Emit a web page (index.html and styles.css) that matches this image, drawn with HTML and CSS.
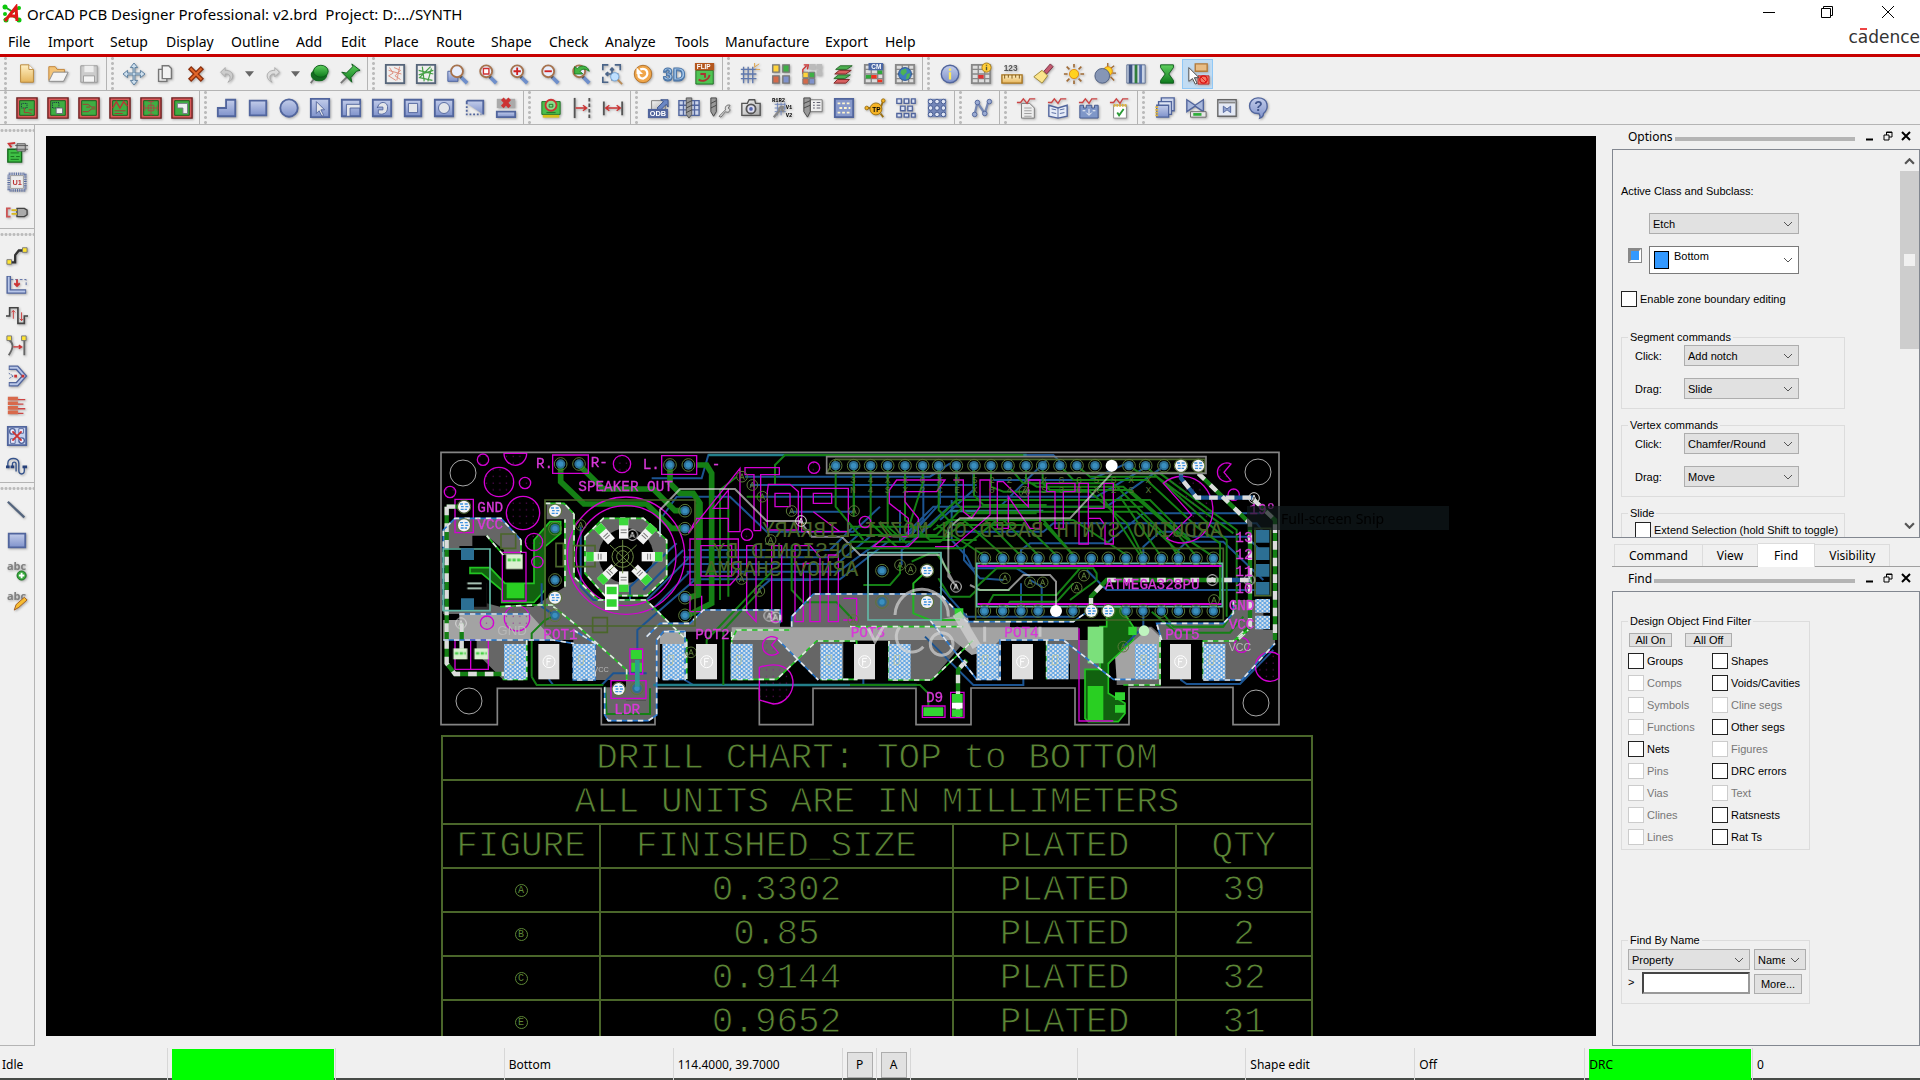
FILE: index.html
```html
<!DOCTYPE html>
<html lang="en">
<head>
<meta charset="utf-8">
<title>OrCAD PCB Designer Professional</title>
<link rel="stylesheet" href="styles.css">
</head>
<body>
<svg class="defs" width="0" height="0" aria-hidden="true">
<defs>
<linearGradient id="blue" x2="0" y2="1"><stop stop-color="#c3cdea"/><stop offset="1" stop-color="#7f92cb"/></linearGradient>
<linearGradient id="silver" x2="1" y2="1"><stop stop-color="#f6f6f6"/><stop offset="1" stop-color="#a9a9a9"/></linearGradient>
<linearGradient id="gold" x2="0" y2="1"><stop stop-color="#fff0c4"/><stop offset="1" stop-color="#e5b55c"/></linearGradient>
<linearGradient id="leaf" x2="0" y2="1"><stop stop-color="#5fd05f"/><stop offset="1" stop-color="#0e7a1c"/></linearGradient>
<symbol id="lens" viewBox="0 0 24 24"><path d="M14 15l7 7" stroke="#6f8fcb" stroke-width="4"/><path d="M13 14l2 2" stroke="#555" stroke-width="3"/><circle cx="10" cy="9" r="6.5" fill="#e8eefc" stroke="#a6724d" stroke-width="2"/></symbol>
<symbol id="board" viewBox="0 0 24 24"><path d="M1 1h22v22H1z" fill="#d85a5a" stroke="#6e2020" stroke-width="1.5"/><path d="M4 4h16v16H4z" fill="#3fae42" stroke="#175c1b"/></symbol>
<symbol id="sheet" viewBox="0 0 24 24"><path d="M6 7h9l5 5v11H6z" fill="#ececec" stroke="#777"/><path d="M9 12h8M9 15h8M9 18h8M9 21h8" stroke="#999"/></symbol>
<symbol id="wave" viewBox="0 0 24 24"><path d="M1 6h4l3-4 4 5 3-5h6" fill="none" stroke="#c44" stroke-width="1.5"/></symbol>
<symbol id="cells" viewBox="0 0 24 24"><path d="M2 2h20v20H2z" fill="#ddd" stroke="#888" stroke-width="2"/><path d="M2 7h20M2 12h20M2 17h20M9 2v20M16 2v20" stroke="#888" stroke-width="1.5"/></symbol>
</defs>
</svg>

<header class="titlebar">
  <svg class="app-icon" viewBox="0 0 20 20"><path d="M3 3l8 5 6-4M2 16l7-5 8 5" fill="none" stroke="#1ca51c" stroke-width="2"/><g fill="#0cc80c"><circle cx="3" cy="3" r="2.5"/><circle cx="3" cy="10" r="2"/><circle cx="4" cy="16" r="2.5"/><circle cx="17" cy="16" r="2.5"/><circle cx="17" cy="4" r="2"/></g><path d="M3 17L14 3l1 14M6 12h9" fill="none" stroke="#e01818" stroke-width="3"/></svg>
  <h1>OrCAD PCB Designer Professional: v2.brd&nbsp; Project: D:.../SYNTH</h1>
  <div class="window-controls">
    <button aria-label="Minimize"><svg viewBox="0 0 12 12"><path d="M0 6.500h12"/></svg></button>
    <button aria-label="Restore"><svg viewBox="0 0 12 12"><path d="M.5 2.500h9v9h-9zM2.500 2V.5h9v9H10"/></svg></button>
    <button aria-label="Close"><svg viewBox="0 0 12 12"><path d="M0 0l12 12M12 0L0 12"/></svg></button>
  </div>
</header>
<div class="menubar">
  <nav class="menu"><button>File</button><button>Import</button><button>Setup</button><button>Display</button><button>Outline</button><button>Add</button><button>Edit</button><button>Place</button><button>Route</button><button>Shape</button><button>Check</button><button>Analyze</button><button>Tools</button><button>Manufacture</button><button>Export</button><button>Help</button></nav>
  <div class="brand">c<span class="macron">a</span>dence</div>
</div>

<div class="toolbar">
 <div class="group">
  <button aria-label="New"><svg viewBox="0 0 24 24"><path d="M5 2h9l5 5v14H5z" fill="url(#gold)" stroke="#b98534"/><path d="M14 2v5h5" fill="#fff" stroke="#b98534"/></svg></button>
  <button aria-label="Open"><svg viewBox="0 0 24 24"><path d="M2 19V4h7l2 3h8v4" fill="#f3c478" stroke="#c28236"/><path d="M2 20L7 10h16l-5 10z" fill="#f4f4f4" stroke="#888"/></svg></button>
  <button aria-label="Save"><svg viewBox="0 0 24 24"><path d="M3 3h18v18H3z" fill="#ccc" stroke="#999"/><path d="M7 3h10v7H7z" fill="#eee"/><path d="M6 14h12v7H6z" fill="#f4f4f4" stroke="#999"/></svg></button>
 </div>
 <div class="group">
  <button aria-label="Move"><svg viewBox="0 0 24 24"><path d="M12 0l4 5h-3v6h6V8l5 4-5 4v-3h-6v6h3l-4 5-4-5h3v-6H5v3l-5-4 5-4v3h6V5H8z" fill="#cfe0ee" stroke="#54789a"/></svg></button>
  <button aria-label="Copy"><svg viewBox="0 0 24 24"><path d="M5 7h9v13H5z" fill="#eee" stroke="#777" stroke-width="1.5"/><path d="M9 3h7l3 3v11H9z" fill="#f2f2f2" stroke="#777" stroke-width="1.500"/></svg></button>
  <button aria-label="Delete"><svg viewBox="0 0 24 24"><path d="M5 5l14 14M19 5L5 19" stroke="#8c2f0c" stroke-width="5"/><path d="M6 6l12 12M18 6L6 18" stroke="#e2672a" stroke-width="2"/></svg></button>
  <button aria-label="Undo"><svg viewBox="0 0 24 24"><path d="M10 5L5 10l5 5v-3c6-1 7 5 3 9 8-4 7-13-3-13z" fill="#ccc" stroke="#aaa"/></svg></button>
  <button class="drop" aria-label="Undo list"><svg viewBox="0 0 10 6"><path d="M0 0h10L5 6z" fill="#666"/></svg></button>
  <button aria-label="Redo"><svg viewBox="0 0 24 24"><path d="M14 5l5 5-5 5v-3c-6-1-7 5-3 9-8-4-7-13 3-13z" fill="#ddd" stroke="#aaa"/></svg></button>
  <button class="drop" aria-label="Redo list"><svg viewBox="0 0 10 6"><path d="M0 0h10L5 6z" fill="#666"/></svg></button>
  <button aria-label="Unfix"><svg viewBox="0 0 24 24"><path d="M6 18l-3 4" stroke="#777" stroke-width="2"/><ellipse cx="12" cy="13" rx="9" ry="7" fill="#146b22"/><ellipse cx="14" cy="9" rx="8" ry="6.500" fill="url(#leaf)" stroke="#0b5a18"/></svg></button>
  <button aria-label="Fix"><svg viewBox="0 0 24 24"><path d="M9 15l-7 7" stroke="#777" stroke-width="2"/><path d="M3 10l5 1 7-7-1-3 9 7-4 1-6 7 1 5z" fill="url(#leaf)" stroke="#0b5a18"/></svg></button>
 </div>
 <div class="group">
  <button aria-label="Unrats all"><svg viewBox="0 0 24 24"><path d="M2 2h20v20H2z" fill="#eee" stroke="#56657a" stroke-width="2"/><path d="M6 5l4 6-5 3 8 5M11 5l7 3-6 6 6 4M5 8l14 4M17 4l-3 15" fill="none" stroke="#dc8a7a"/></svg></button>
  <button aria-label="Rats all"><svg viewBox="0 0 24 24"><path d="M2 2h20v20H2z" fill="#eee" stroke="#56657a" stroke-width="2"/><path d="M4 8l16 4M8 4l2 16M17 4L5 16l14 3M4 13l16-5M14 20l4-14" fill="none" stroke="#45a045" stroke-width="1.300"/></svg></button>
  <button aria-label="Zoom points"><svg viewBox="0 0 24 24"><path d="M2 9h11v11H2z" fill="url(#blue)" stroke="#4a62a0"/><use href="#lens" x="2"/></svg></button>
  <button aria-label="Zoom fit"><svg viewBox="0 0 24 24"><use href="#lens"/><path d="M7 6h6v6H7z" fill="#fff" stroke="#d03030" stroke-width="1.500"/></svg></button>
  <button aria-label="Zoom in"><svg viewBox="0 0 24 24"><use href="#lens"/><path d="M6 9h8M10 5v8" stroke="#d02020" stroke-width="2"/></svg></button>
  <button aria-label="Zoom out"><svg viewBox="0 0 24 24"><use href="#lens"/><path d="M6 9h8" stroke="#d02020" stroke-width="2"/></svg></button>
  <button aria-label="Zoom previous"><svg viewBox="0 0 24 24"><use href="#lens"/><path d="M21 9c-2-7-10-7-13-3L5 4v8h9l-3-3c2-3 6-3 10 0z" fill="#44b544" stroke="#1c7a24"/></svg></button>
  <button aria-label="Zoom selection"><svg viewBox="0 0 24 24"><path d="M2 8V2h6M15 2h6v6M2 15v6h6M12 5v14M5 12h14M12 5l-2 3M12 5l2 3M5 12l3-2M5 12l3 2" fill="none" stroke="#4a6488" stroke-width="1.800"/><path d="M18 18l5 5" stroke="#b98a55" stroke-width="2"/><circle cx="15" cy="15" r="4.500" fill="#bfe0ff" stroke="#6fa3d8"/></svg></button>
  <button aria-label="Redraw"><svg viewBox="0 0 24 24"><circle cx="12" cy="12" r="9.500" fill="#f0a64a" stroke="#ad6f28"/><path d="M9 7c8-3 11 7 3 10-3 0-5-2-5-5" fill="none" stroke="#fff" stroke-width="2.500"/><path d="M5 5v7h7z" fill="#fff"/></svg></button>
  <button aria-label="3D canvas"><svg viewBox="0 0 24 24"><text x="0" y="20" class="icon-3d shade">3D</text><text x="0" y="18" class="icon-3d">3D</text></svg></button>
  <button aria-label="Flip design"><svg viewBox="0 0 24 24"><path d="M2 8h19v15H2z" fill="#4fc352" stroke="#1b6b22"/><path d="M5 18c4 3 11 1 12-5M7 12h5v4" fill="none" stroke="#a33" stroke-width="2"/><path d="M1 0h21v8H1z" fill="#b4561c"/><text x="3" y="7" class="icon-label light">FLIP</text></svg></button>
 </div>
 <div class="group">
  <button aria-label="Grid toggle"><svg viewBox="0 0 24 24"><path d="M2 7h17M2 12h17M2 17h17M5 4v18M10 4v18M15 4v18" stroke="#5f78ad" stroke-width="1.500"/><path d="M16 5l6-4M18 7h5M17 4V0" stroke="#e0a040"/></svg></button>
  <button aria-label="Color"><svg viewBox="0 0 24 24"><g stroke="#777" stroke-width="1.500"><path d="M3 2h7v8H3z" fill="#ffd43b"/><path d="M14 2h7v8h-7z" fill="#3faf46"/><path d="M3 14h7v8H3z" fill="#d46a4a"/><path d="M14 14h7v8h-7z" fill="#7f92cb"/></g></svg></button>
  <button aria-label="Color priority"><svg viewBox="0 0 24 24"><path d="M9 1h7v6H9zM17 1h6v6h-6zM17 8h6v6h-6z" fill="#bbb"/><path d="M2 12V7l4-4M3 2l5 0-1 5" fill="none" stroke="#c33" stroke-width="1.500"/><g stroke="#777"><path d="M2 10h6v6H2z" fill="#ffd43b"/><path d="M9 10h6v6H9z" fill="#3faf46"/><path d="M2 17h6v6H2z" fill="#d46a4a"/><path d="M9 17h6v6H9z" fill="#7f92cb"/></g></svg></button>
  <button aria-label="Cross section"><svg viewBox="0 0 24 24"><path d="M9 3h13l-6 4H4zM7 13h13l-6 4H2z" fill="#4caf50" stroke="#27692b"/><path d="M8 8h13l-6 4H3zM6 18h13l-4 4H2z" fill="#d86060" stroke="#7c2424"/></svg></button>
  <button aria-label="Constraint manager"><svg viewBox="0 0 24 24"><use href="#cells"/><path d="M3 13h6v4H3zM16 8h5v4h-5z" fill="#2fa83a"/><path d="M9 13h6v4H9zM16 18h5v3h-5z" fill="#e32"/><path d="M6 0h16v8H6z" fill="#4d68a5"/><text x="9" y="7" class="icon-label light">CM</text></svg></button>
  <button aria-label="Worksheets"><svg viewBox="0 0 24 24"><use href="#cells"/><circle cx="12" cy="12" r="7" fill="#3f7cc0" stroke="#27508c"/><path d="M8 8l5-2 1 4-4 4-3-3zM14 12l4-1-2 6-3 1z" fill="#4db455"/></svg></button>
 </div>
 <div class="group">
  <button aria-label="Show element"><svg viewBox="0 0 24 24"><circle cx="12" cy="12" r="9.500" fill="url(#blue)" stroke="#51659d" stroke-width="1.500"/><path d="M12 6v2.500M12 10v8" stroke="#ffe95a" stroke-width="2.500"/></svg></button>
  <button aria-label="Show constraints"><svg viewBox="0 0 24 24"><use href="#cells"/><path d="M9 13h6v4H9z" fill="#d33"/><circle cx="18" cy="5" r="5" fill="#ffce3a" stroke="#a87b14"/><path d="M18 2v1M18 4v4" stroke="#553" stroke-width="1.500"/></svg></button>
  <button aria-label="Show measure"><svg viewBox="0 0 24 24"><text x="3" y="9" class="icon-num">123</text><path d="M1 13h22v9H1z" fill="url(#gold)" stroke="#a8741e" stroke-width="1.500"/><path d="M4 13v4M8 13v3M12 13v4M16 13v3M20 13v4" stroke="#7a5210"/></svg></button>
  <button aria-label="Assign color"><svg viewBox="0 0 24 24"><path d="M13 9l7-8 3 3-7 8z" fill="#c45a70" stroke="#7a2c40"/><path d="M11 8l6 6-6 8-9-7z" fill="#fbe58c" stroke="#9a8434"/></svg></button>
  <button aria-label="Shadow on"><svg viewBox="0 0 24 24"><path d="M12 1v4M12 19v4M1 12h4M19 12h4M4 4l3 3M17 17l3 3M20 4l-3 3M7 17l-3 3" stroke="#a06b35" stroke-width="1.800"/><circle cx="12" cy="12" r="5" fill="#ffd21f" stroke="#e08a10"/></svg></button>
  <button aria-label="Shadow off"><svg viewBox="0 0 24 24"><path d="M15 0v5M22 3l-4 3M20 11h4M18 15l4 4" stroke="#a06b35" stroke-width="1.500"/><circle cx="15" cy="9" r="5" fill="#ffd21f" stroke="#e08a10"/><circle cx="9" cy="14" r="8" fill="#8696b5" stroke="#4c5d80"/></svg></button>
  <button aria-label="Layers"><svg viewBox="0 0 24 24"><path d="M2 2h20v20H2z" fill="#c9d3e4" stroke="#5c6f92"/><path d="M6 2v20" stroke="#3c5280" stroke-width="4"/><path d="M12 2v20" stroke="#2f7d3a" stroke-width="3"/><path d="M17 2v20" stroke="#5670a8" stroke-width="3"/></svg></button>
  <button aria-label="Busy"><svg viewBox="0 0 24 24"><path d="M5 2h14v3l-5 7 5 7v3H5v-3l5-7-5-7z" fill="url(#leaf)" stroke="#0b5a18"/></svg></button>
  <button class="selected" aria-label="Shape edit" aria-pressed="true"><svg viewBox="0 0 24 24"><path d="M9 1h13v8H9z" fill="#e8bd85" stroke="#b27b3b" stroke-width="1.500"/><path d="M12 14h12v9H12z" fill="#f37a68" stroke="#b22"/><circle cx="18" cy="18" r="4" fill="none" stroke="#d11" stroke-width="1.500"/><path d="M15 15l6 6" stroke="#d11"/><path d="M2 5v15l4-3 3 6 2-1-3-6h5z" fill="#fff" stroke="#444"/></svg></button>
 </div>
</div>

<div class="toolbar">
 <div class="group">
  <button aria-label="Etch edit"><svg viewBox="0 0 24 24"><use href="#board"/><path d="M6 7h6v5H6z" fill="none" stroke="#124" stroke-dasharray="1 1"/><path d="M9 12v5h4l4 1M14 14h4" fill="none" stroke="#a33"/></svg></button>
  <button aria-label="Placement edit"><svg viewBox="0 0 24 24"><use href="#board"/><path d="M6 6h7v6H6z" fill="none" stroke="#124" stroke-dasharray="1 1"/><path d="M10 12h7v6h-7z" fill="#eee" stroke="#667"/></svg></button>
  <button aria-label="Flow planning"><svg viewBox="0 0 24 24"><use href="#board"/><path d="M5 8h6l4 3h4M5 16h6l4-3h4M9 11h4" fill="none" stroke="#a33"/></svg></button>
  <button aria-label="Signal integrity"><svg viewBox="0 0 24 24"><use href="#board"/><path d="M4 12l4-7 4 7 4-7 4 5" fill="none" stroke="#b33" stroke-width="1.500"/><path d="M6 15h12M6 18h9" stroke="#a33"/></svg></button>
  <button aria-label="RF edit"><svg viewBox="0 0 24 24"><use href="#board"/><path d="M12 4v16M4 12h16M9 9h6v6H9zM9 5h6M9 19h6M5 9v6M19 9v6" fill="none" stroke="#a44"/></svg></button>
  <button aria-label="General edit"><svg viewBox="0 0 24 24"><use href="#board"/><path d="M7 7h11v11h-5v-6H7z" fill="#eee" stroke="#778"/></svg></button>
 </div>
 <div class="group blueprint">
  <button aria-label="Shape polygon"><svg viewBox="0 0 24 24"><path d="M2 12h9V3h10v18H2z"/></svg></button>
  <button aria-label="Shape rectangle"><svg viewBox="0 0 24 24"><path d="M3 4h18v16H3z"/></svg></button>
  <button aria-label="Shape circle"><svg viewBox="0 0 24 24"><circle cx="12" cy="12" r="9.500"/></svg></button>
  <button aria-label="Shape select"><svg viewBox="0 0 24 24"><path d="M2 2h20v20H2z"/><path class="pale" d="M8 5v13l3-3 3 6 2-1-3-6h4z"/></svg></button>
  <button aria-label="Void element"><svg viewBox="0 0 24 24"><path d="M2 3h20v18H2z"/><path class="pale" d="M7 21V8h15v4H11v9z"/></svg></button>
  <button aria-label="Void polygon"><svg viewBox="0 0 24 24"><path d="M2 3h20v18H2z"/><path class="pale" d="M7 12c2-9 12-7 11 0 0 6-6 8-10 6v-4h5v-3H7z"/></svg></button>
  <button aria-label="Void rectangle"><svg viewBox="0 0 24 24"><path d="M3 3h18v18H3z"/><path class="pale" d="M7 7h10v10H7z"/></svg></button>
  <button aria-label="Void circle"><svg viewBox="0 0 24 24"><path d="M2 3h20v18H2z"/><circle class="pale" cx="12" cy="12" r="6"/></svg></button>
  <button aria-label="Edit boundary"><svg viewBox="0 0 24 24"><path d="M3 4h18v15L3 7z" stroke="none"/><path d="M3 4h18v15M3 4v4" fill="none"/><path d="M3 10v9h16" fill="none" stroke-dasharray="2 2"/></svg></button>
  <button aria-label="Delete islands"><svg viewBox="0 0 24 24"><path d="M2 2h20v10H2z" fill="#aaa" stroke="none"/><path d="M2 16h20v6H2z"/><path d="M8 2l8 9M16 2l-8 9" stroke="#c33" stroke-width="4"/></svg></button>
 </div>
 <div class="group">
  <button aria-label="Design check"><svg viewBox="0 0 24 24"><path d="M2 5h20v14H2z" fill="#4bbf4b" stroke="#1d7223"/><path d="M3 21h18" stroke="#d7c21c" stroke-width="3"/><circle cx="12" cy="9" r="6" fill="#8ddf8d" stroke="#c33" stroke-width="2"/><path d="M7 17h10M10 8h4v3h-4z" stroke="#1d7223" fill="none"/></svg></button>
  <button aria-label="Align left"><svg viewBox="0 0 24 24"><path d="M4 1v22" stroke="#555" stroke-width="2"/><path d="M20 1v22" stroke="#555" stroke-width="2" stroke-dasharray="4 2"/><path d="M5 12h12M13 9l4 3-4 3" fill="none" stroke="#c33" stroke-width="1.500"/></svg></button>
  <button aria-label="Dimension"><svg viewBox="0 0 24 24"><path d="M2 5v15M22 5v15" stroke="#555" stroke-width="2"/><path d="M4 12h16M8 9l-4 3 4 3M16 9l4 3-4 3" fill="none" stroke="#c33" stroke-width="1.500"/></svg></button>
 </div>
 <div class="group">
  <button aria-label="ODB export"><svg viewBox="0 0 24 24"><path d="M5 4h15v10H5z" fill="url(#silver)" stroke="#777"/><path d="M11 12l7-7-3-2h8v8l-2-3-7 7z" fill="#6b87c4" stroke="#384f88"/><path d="M1 13h22v10H1z" fill="#51659d"/><text x="3" y="21" class="icon-odb">ODB</text></svg></button>
  <button aria-label="Drill table"><svg viewBox="0 0 24 24"><path d="M1 4h22v16H1z" fill="#cdd6ec" stroke="#51659d" stroke-width="1.500"/><path d="M1 9h22M1 14h22M6 4v16M18 4v16" stroke="#51659d" stroke-width="1.500"/><path d="M9 1h6v18l-3 4-3-4z" fill="#999" stroke="#555"/><path d="M9 7l6-3M9 12l6-3M9 17l6-3" stroke="#444"/></svg></button>
  <button aria-label="NC parameters"><svg viewBox="0 0 24 24"><path d="M2 1h6v15l-3 5-3-5z" fill="#999" stroke="#444"/><path d="M2 7l6-3M2 12l6-3" stroke="#444"/><path d="M11 21l7-7c-1-4 2-6 5-5l-2 3 2 2c-1 3-3 3-5 2l-5 6z" fill="#ddd" stroke="#666"/></svg></button>
  <button aria-label="Artwork"><svg viewBox="0 0 24 24"><path d="M2 7h6l2-4h6l1 4h5v13H2z" fill="url(#silver)" stroke="#555" stroke-width="1.500"/><circle cx="12" cy="13" r="5" fill="#dde" stroke="#555" stroke-width="2"/><circle cx="12" cy="13" r="2" fill="#56a"/></svg></button>
  <button aria-label="Auto rename"><svg viewBox="0 0 24 24"><path d="M4 8h12M4 12h12M4 16h12M7 6v14M11 6v14M15 6v8" stroke="#6d83b8"/><path d="M3 22l6-7c-1-3 2-5 4-4l-1 3 2 2" fill="none" stroke="#888" stroke-width="2.500"/><text x="1" y="5" class="icon-tiny">R1R2</text><text x="16" y="13" class="icon-tiny">V1</text><text x="16" y="22" class="icon-tiny">V2</text></svg></button>
  <button aria-label="Drill legend"><svg viewBox="0 0 24 24"><path d="M9 3h13v13H9z" fill="#eee" stroke="#777"/><path d="M12 6h2M16 6h4M12 9h2M16 9h4M12 12h2M16 12h4" stroke="#556"/><path d="M2 1h7v15l-3 6-4-6z" fill="#999" stroke="#444"/><path d="M2 7l7-3M2 12l7-3" stroke="#444"/></svg></button>
  <button aria-label="Thieving"><svg viewBox="0 0 24 24"><path d="M2 2h20v20H2z" fill="#8799cb" stroke="#51659d" stroke-width="2"/><path d="M5 7h14M7 12h12M5 17h14" stroke="#fff6d0" stroke-width="2" stroke-dasharray="3 2"/></svg></button>
  <button aria-label="Testprep"><svg viewBox="0 0 24 24"><path d="M2 12h16l3-8M18 18l3 4" stroke="#9a7014" stroke-width="2" fill="none"/><circle cx="13" cy="13" r="6.500" fill="#f5b324" stroke="#9a7014"/><circle cx="3" cy="12" r="2" fill="#f5b324" stroke="#9a7014"/><circle cx="21" cy="4" r="2" fill="#f5b324" stroke="#9a7014"/><text x="9" y="16" class="icon-label">TP</text></svg></button>
  <button aria-label="Panel layout"><svg viewBox="0 0 24 24"><g fill="#dfe5f4" stroke="#51659d" stroke-width="1.500"><path d="M2 2h5v5H2zM10 2h5v5h-5zM18 2h4v5h-4zM6 10h5v5H6zM14 10h5v5h-5zM2 18h5v4H2zM10 18h5v4h-5zM18 18h4v4h-4z"/></g></svg></button>
  <button aria-label="Pin array"><svg viewBox="0 0 24 24"><path d="M2 2h20v20H2z" fill="#7386b8"/><g fill="#dfe5f4" stroke="#40558c"><circle cx="5" cy="5" r="2.500"/><circle cx="12" cy="5" r="2.500"/><circle cx="19" cy="5" r="2.500"/><circle cx="5" cy="12" r="2.500"/><circle cx="12" cy="12" r="2.500"/><circle cx="19" cy="12" r="2.500"/><circle cx="5" cy="19" r="2.500"/><circle cx="12" cy="19" r="2.500"/><circle cx="19" cy="19" r="2.500"/></g></svg></button>
 </div>
 <div class="group">
  <button aria-label="Waveform"><svg viewBox="0 0 24 24"><path d="M4 19L7 6l8 12 4-13" fill="none" stroke="#7688b2" stroke-width="2.500"/><g fill="#9aabd2" stroke="#51659d"><circle cx="4" cy="19" r="2.500"/><circle cx="7" cy="6" r="2.500"/><circle cx="15" cy="18" r="2.500"/><circle cx="20" cy="5" r="2.500"/></g></svg></button>
 </div>
 <div class="group">
  <button aria-label="Signal report"><svg viewBox="0 0 24 24"><use href="#sheet"/><use href="#wave"/></svg></button>
  <button aria-label="Signal library"><svg viewBox="0 0 24 24"><path d="M2 9l10 3 10-3v12l-10 2-10-2z" fill="#e6ecf8" stroke="#51659d" stroke-width="1.500"/><path d="M12 12v11M5 13l5 1M5 17l5 1M14 14l5-1M14 18l5-1" stroke="#51659d"/><use href="#wave"/></svg></button>
  <button aria-label="Signal model"><svg viewBox="0 0 24 24"><path d="M2 9h4v3h3V9h6v3h3V9h4v14H2z" fill="#7f97c8" stroke="#40558c"/><path d="M12 13v6M9 17l3 3 3-3M5 15h3M16 15h3" stroke="#fff" fill="none"/><use href="#wave"/></svg></button>
  <button aria-label="Signal audit"><svg viewBox="0 0 24 24"><path d="M5 9h14v14H5z" fill="#fff" stroke="#888"/><path d="M5 9h14" stroke="#e0b53c" stroke-width="3" stroke-dasharray="2 1"/><path d="M9 17l2 3 5-7" fill="none" stroke="#2a9a35" stroke-width="2"/><use href="#wave"/></svg></button>
 </div>
 <div class="group">
  <button aria-label="Reports"><svg viewBox="0 0 24 24"><path d="M8 1h14v14H8z" fill="#cdd6ec" stroke="#51659d" stroke-width="1.500"/><path d="M5 5h14v14H5z" fill="#dde4f4" stroke="#51659d" stroke-width="1.500"/><path d="M3 9h13v13H3z" fill="url(#blue)" stroke="#51659d" stroke-width="1.500"/><path d="M3 10v12" stroke="#e0b53c" stroke-width="3" stroke-dasharray="2 1"/></svg></button>
  <button aria-label="Database check"><svg viewBox="0 0 24 24"><path d="M2 3l9 6 9-6v13l-9-6-9 6z" fill="#a9b8dc" stroke="#51659d" stroke-width="1.500"/><path d="M6 16h17v6H6z" fill="#e6e6e6" stroke="#666"/><path d="M9 19h9" stroke="#2fae3a" stroke-width="3"/></svg></button>
  <button aria-label="Viewer"><svg viewBox="0 0 24 24"><path d="M2 3h20v18H2z" fill="#e4e9f4" stroke="#666" stroke-width="1.500"/><path d="M3 6h18" stroke="#888" stroke-width="2"/><path d="M8 10l4 3 4-3v7l-4-3-4 3z" fill="#8fa1cf" stroke="#51659d"/></svg></button>
  <button aria-label="Help"><svg viewBox="0 0 24 24"><path d="M12 1c12 0 12 12 6 17 0 3-1 4-4 5 1-2 0-3-1-5C-1 19 0 1 12 1z" fill="url(#blue)" stroke="#51659d" stroke-width="1.500"/><text x="8" y="15" class="icon-help">?</text></svg></button>
 </div>
</div>

<div class="workspace">
 <aside class="dock">
  <div class="vgroup">
   <button aria-label="Place manually"><svg viewBox="0 0 24 24"><path d="M2 9h15v14H2z" fill="#3fbf45" stroke="#14681c" stroke-width="1.500"/><path d="M5 13h9M5 17h4M11 17h4M5 20h9" stroke="#14681c"/><path d="M12 3h9v8h-9z" fill="#bbb" stroke="#555"/><path d="M10 5h14M10 9h14" stroke="#555"/><path d="M10 2L3 3l3 4" fill="none" stroke="#c33" stroke-width="2"/></svg></button>
   <button aria-label="Component"><svg viewBox="0 0 24 24"><path d="M3 3h18v18H3z" fill="#e3e3e3" stroke="#51659d" stroke-width="3" stroke-dasharray="1 1"/><path d="M5 5h14v14H5z" fill="#ececec" stroke="#999"/><text x="7" y="15" class="icon-ref">U1</text></svg></button>
   <button aria-label="Connect"><svg viewBox="0 0 24 24"><path d="M12 8h8l3 2v5l-3 2h-8z" fill="#aaa" stroke="#444" stroke-width="1.500"/><path d="M6 10h6M6 14h6" stroke="#d9b820" stroke-width="2"/><path d="M5 8H1v9h4" fill="none" stroke="#c55" stroke-width="2"/></svg></button>
  </div>
  <div class="vgroup">
   <button aria-label="Add connect"><svg viewBox="0 0 24 24"><path d="M4 19h6v-8l4-5h6" fill="none" stroke="#333" stroke-width="2.500"/><path d="M1 16h5v5H1zM18 3h5v5h-5z" fill="#ffe431" stroke="#777"/></svg></button>
   <button aria-label="Slide"><svg viewBox="0 0 24 24"><path d="M5 5h17v8" fill="none" stroke="#51659d" stroke-dasharray="3 2"/><path d="M3 1v17h19" fill="none" stroke="#51659d" stroke-width="5"/><path d="M3 2v16h18" fill="none" stroke="#b8c6e8" stroke-width="2"/><path d="M12 5v7M9 9l3 3 3-3" fill="none" stroke="#c33" stroke-width="2"/></svg></button>
   <button aria-label="Delay tune"><svg viewBox="0 0 24 24"><path d="M0 12h4V3h9v17h7v-8h4" fill="none" stroke="#444" stroke-width="1.800"/><path d="M8 15V6M6 8l2-2 2 2M17 8v9M15 15l2 2 2-2" fill="none" stroke="#c33"/></svg></button>
   <button aria-label="Custom smooth"><svg viewBox="0 0 24 24"><path d="M3 5c5 4 6 8 0 17M20 5v17" fill="none" stroke="#666" stroke-width="2"/><path d="M8 13h9M14 11l3 2-3 2" fill="none" stroke="#c33" stroke-width="1.500"/><path d="M1 1h5v5H1zM17 1h5v5h-5z" fill="#ffe431" stroke="#777"/></svg></button>
   <button aria-label="Vertex"><svg viewBox="0 0 24 24"><path d="M3 3h9l8 9-8 9H3" fill="none" stroke="#51659d" stroke-width="5"/><path d="M4 3h8l8 9-8 9H4" fill="none" stroke="#b8c6e8" stroke-width="2"/><path d="M3 9l5 3-5 3" fill="none" stroke="#51659d" stroke-dasharray="2 1"/><path d="M9 12h3M17 12h3" stroke="#c33" stroke-width="3"/></svg></button>
   <button aria-label="Spread"><svg viewBox="0 0 24 24"><path d="M2 4h11M2 9h11M2 14h11M2 19h11" stroke="#d8694b" stroke-width="4"/><path d="M13 5h8M13 10h6M13 15h8M13 20h6" stroke="#c44" stroke-width="1.500"/></svg></button>
   <button aria-label="Auto route"><svg viewBox="0 0 24 24"><path d="M2 2h20v20H2z" fill="#c6d2ee" stroke="#51659d" stroke-width="2"/><circle cx="7" cy="7" r="3" fill="#eef" stroke="#51659d" stroke-width="1.500"/><circle cx="17" cy="17" r="3" fill="#eef" stroke="#51659d" stroke-width="1.500"/><path d="M14 4h5v5h-5zM5 15h5v5H5z" fill="#eef" stroke="#51659d"/><path d="M7 7l10 10M17 7L7 17" stroke="#c33" stroke-width="2"/></svg></button>
   <button aria-label="Fanout"><svg viewBox="0 0 24 24"><path d="M2 14V9c0-7 12-7 12 0v8c0 5 6 5 6 0v-5M7 14v-4c0-3 4-3 4 0v8" fill="none" stroke="#35538c" stroke-width="1.500"/><path d="M0 13h4M5 13h4M18 13h5" stroke="#27417a" stroke-width="3"/></svg></button>
  </div>
  <div class="vgroup">
   <button aria-label="Add line"><svg viewBox="0 0 24 24"><path d="M2 3l18 17" stroke="#54657e" stroke-width="2.500"/></svg></button>
   <button aria-label="Add rectangle"><svg viewBox="0 0 24 24"><path d="M3 5h18v15H3z" fill="url(#blue)" stroke="#51659d" stroke-width="2"/></svg></button>
   <button aria-label="Add text"><svg viewBox="0 0 24 24"><text x="1" y="12" class="icon-abc">abc</text><circle cx="17" cy="18" r="5" fill="#35a83a" stroke="#176d1e"/><path d="M14 18h6M17 15v6" stroke="#fff" stroke-width="2"/></svg></button>
   <button aria-label="Edit text"><svg viewBox="0 0 24 24"><text x="1" y="12" class="icon-abc">abc</text><path d="M9 23l2-6 9-8 3 3-9 8z" fill="#f7bd32" stroke="#a0591c"/></svg></button>
  </div>
 </aside>

 <main class="canvas">
<svg class="pcb" viewBox="0 0 2610 870" role="img" aria-label="Board layout">
<defs>
<pattern id="dash" width="14" height="12" patternUnits="userSpaceOnUse"><path d="M0 0h14v12H0z" fill="#ececec"/><path d="M1 3h9M8 9h9M-6 9h9" stroke="#3f93e0" stroke-width="4"/></pattern>
<pattern id="dots" width="20" height="20" patternUnits="userSpaceOnUse"><path d="M8 8h3v3H8z" fill="#8a108a"/></pattern>
<g id="pin"><circle r="19" class="ring"/><circle r="14" class="pad"/><circle r="8" fill="#3a8fc0"/></g>
<g id="hot"><circle r="20" class="ring"/><circle r="18" fill="#f4f4f4"/><path d="M-12-8h9M2-8h9M-9 0h8M4 0h9M-10 8h9M2 8h7" stroke="#3f93e0" stroke-width="4"/></g>
<g id="via" class="ring"><circle r="16"/><path d="M-7 9L0-9 7 9M-4 3h8"/></g>
<g id="padA"><path d="M0 612h66v106H0z" fill="url(#dash)"/><path d="M18 646h16l-4 28H16z" fill="none" stroke="#b9c6a8" stroke-width="3"/></g>
<g id="padB"><path d="M0 612h63v106H0z" fill="#dedede"/><circle cx="32" cy="665" r="18" fill="none" stroke="#fff" stroke-width="3"/><path d="M26 677v-22h13M26 665h10" fill="none" stroke="#fff" stroke-width="3"/></g>
<g id="led"><path d="M-14-36h28v62h-28z" fill="#f2f2f2"/><path d="M-14-36h28v22h-28z" fill="#3bd83b"/><path d="M-9 0h18M-9 8h18" stroke="#777" stroke-width="3"/></g>
<path id="rail-left" d="M50 200H90M50 200V670L75 702H290M95 550V640"/>
<path id="rail-right" d="M2305 100L2460 250V560L2420 600M2472 180L2535 240V600M1983 500V470L2030 420H2380M1584 830V690L1610 660"/>
<path id="rail-blue" d="M2253 77V115L2300 173H2470M2380 420H2460"/>
<path id="edge-top" d="M405 440V238M432 222V410L505 480H648L770 600V718M220 345L170 287M273 300V337M370 500L445 560L590 690V720M370 495H310L210 500M465 290L520 235H640L710 300V410L650 467H525L465 400ZM905 575V718H1040L1160 603H1280V718H1171M1260 560H1600M1377 603V720H1505L1630 600M1850 600V718M2190 590V735H2080M2320 718V603H2410L2455 570M905 600L920 570H1080M290 600V718H218M345 190H402L432 222"/>
<path id="edge-bottom" d="M40 512V270L75 235H213L273 300M88 522H300M40 600H370L430 610V720H495V610L430 570M524 742V825L535 842H655L680 825V600L700 575H765V718H697M650 590L690 550H780L820 510H1050V550M1085 560V530L1150 462H1530L1610 545H1930L1965 520M1045 600L1165 720M1500 540L1640 718H1710V600H1900L2050 718H2115M2195 600L2180 550H2380L2410 520V480M2320 720H2435L2535 610"/>
</defs>
<path d="M33 37H2547V854H2409V742H2097V854H1935V744H1623V854H1458V745H1149V854H988V745H675V854H514V745H202V854H33Z" fill="none" stroke="#848484" stroke-width="5"/>

<g fill="#666">
<path d="M75 235H213L273 300V345H222V330L170 287H127V318H88V325H40V270Z"/>
<path d="M40 512H95V430H170V490L210 500H310L405 440V238H350V190H402L432 222V410L505 480H648L770 600H690V718L648 670V782H588V720H430V600H290V718H218L140 640V522H40Z"/>
<path d="M465 290L520 235H640L710 300V410L650 467H525L465 400Z"/>
<path d="M524 742H588V782H648V590L690 550H780L820 510H1050V560H1085V530L1150 462H1530L1610 545H1740V603H1605L1505 720H1377V603H1160L1040 720H905V575H700L680 600V825L655 842H535L524 825Z"/>
<path d="M1045 600H1240V718H1165Z"/><path d="M1640 603H1712V718H1640Z"/><path d="M1850 600H1990L2045 560H2165L2192 585V735H2060V640L2020 700L1965 718H1920V670L1850 718Z"/>
<path d="M2180 550H2380L2410 520V480H2500V570H2535V610L2435 720H2320V600H2195Z"/>
</g>
<g fill="#a3a3a3"><path d="M88 522H300L370 600H40V540H88Z"/><path d="M905 562H1945V600H1710L1670 640L1605 600H1160L1105 660L1045 600H905Z"/><path d="M690 590L715 570H765V612H690Z"/><path d="M1500 545L1610 520L1645 640L1625 645Z"/><path d="M2055 650L2160 562L2190 590V718H2060Z"/></g>
<circle cx="588" cy="347" r="82" fill="#000"/>
<path d="M40 327H180V512H40Z" fill="#000" opacity=".5"/><path d="M90 350H170V500H90Z"/>
<g fill="#11620f" stroke="#22c322" stroke-width="5"><path d="M120 383H180L225 430H312V300L360 245H392V280L345 320V450L312 487H215V450L155 400H120Z"/><path d="M1965 688H2010V560H2030V500H2070L2110 560V600L2035 670V760L2085 790V820L2065 845H1975L1965 835Z"/></g>
<path d="M1973 738H2020V840H1973ZM230 430H283V475H230Z" fill="#29cf22"/><path d="M1973 560H2020V670H1973Z" fill="#7be07b"/>

<g class="blue">
<path d="M665 115H815L835 45H1870L1890 65M690 290V240L740 170H900L1010 275H1270L1350 200M945 110H1500L1560 70M960 135H1640M1000 170H1700M1080 215H1270M775 330H1200L1270 260M760 352H1210L1290 280M760 372H1220L1320 290M770 395H1225L1340 310M780 418H1230L1380 300M740 310L600 440V480H490L452 440V260M760 330L640 450M775 355L650 480M780 395L665 510M800 415L622 570V640M335 430V500L375 527M358 690V720L370 735H515L550 700H650M765 600V720L790 735H1240M985 450L1020 420H1150"/>
<path d="M1300 735V690M1410 210V300L1510 200H1710L1850 60M1480 75V240L1420 300M1530 80V190L1440 290M1580 77V180L1480 270M1630 80V150L1530 240M1690 120H1980L2090 70M1700 170H2000L2150 80M1560 200H2030L2200 80M1580 275H1840L1870 250H2480L2510 290M2140 355V320L2190 275H2240L2290 290H2450L2505 345M2245 355V330L2270 305H2380L2500 420M1773 355V330L1800 310H2030L2140 220H2500M1565 180V300L1610 350L1640 410M1602 320V360L1650 415L1720 420M1530 440L1610 530H1930V520M1630 385H1760L1800 410M1835 513V440L1800 420M1773 513V430M2140 513V560M2080 620L2140 560M1970 390L2030 450H2500M1485 590L1630 735H1780V690M2253 690V720L2270 732H2430L2530 630M1415 375V330L1520 240"/>
</g>
<path d="M835 45H1790M670 735H1460M1560 213H1840" fill="none" stroke="#237f8a" stroke-width="7"/>

<g class="green">
<path d="M392 75V125L462 192H650L725 265H765M447 75L520 147H670L735 212H765M720 75V130L750 160H790L810 190V300M800 75H830L845 100V490L765 530M805 190V465L765 475" stroke-width="17"/>
<path d="M305 710V580L345 540L375 527M305 710L320 735H520M525 740L530 822H660V745M870 480V150L920 110M895 470V170M990 452L880 570V735M830 640V600L1020 400M1035 135V75L1065 45H1780M1217 77V200L1300 300M1271 77V230M950 170H1000M1085 320V450L1120 487H1220L1270 540"/>
<path d="M1272 77V215M1322 77V250L1400 320M1373 77V260L1430 310M1425 77V240L1500 300H1640M1478 77V130L1440 250M1526 77V210L1570 255H1780M1579 77V190L1610 220H1820M1632 77V165L1660 195H1850M1683 77V140L1720 155H1980L2090 250L2140 350M1734 77L1780 130H2050L2200 280L2245 350M1788 77V120L1820 140H2080L2240 280L2300 350M1838 77V130L1860 150H2100L2260 290L2350 350M1890 77L1930 120H2150L2300 260L2370 310V480M1941 77L1980 110H2180L2390 300V530M2097 77L2130 100H2190L2420 270V500L2380 560H2300M2147 77L2180 110L2410 280M1260 260H1500L1580 180H2160L2280 300M1260 285H1520L1600 200H2140M1260 305H1530L1640 215H2120L2250 340M1260 325H1600L1700 240H1930L2090 345M1350 245L1390 290H1560M1510 270L1560 240H1840L1930 345M1520 255L1660 345M1600 240L1718 345M1660 235L1770 345M1720 240L1824 345M1780 250L1878 345M1840 250L1929 345M2010 160L2130 345M2070 170L2190 345"/>
<path d="M1663 513L1690 465H1880L1950 385H1990L2000 400V420L1920 480M1720 513L1740 485H1880L1930 430M1640 440L1700 385H1960M2165 515L2240 578H2400L2440 530M1445 365L1500 340H1520L1560 400M1300 435H1380L1410 400V375M1525 415L1560 470H1620L1640 450L1740 450M1260 735H1470L1495 760V800M2194 513L2230 560H2380"/>
<path d="M1490 393L1450 430V520L1500 540H1590" stroke="#22b422"/>
</g>

<g class="mag">
<g fill="url(#dots)"><circle cx="159" cy="59" r="17"/><circle cx="207" cy="126" r="44"/><circle cx="285" cy="129" r="17"/><circle cx="60" cy="156" r="17"/><circle cx="279" cy="219" r="50"/><circle cx="576" cy="72" r="26"/><path d="M222 40H290A34 36 0 0 1 222 40Z"/><circle cx="312" cy="306" r="26"/><circle cx="322" cy="366" r="17"/><circle cx="261" cy="535" r="38"/><circle cx="171" cy="548" r="20"/><circle cx="1152" cy="83" r="17"/><circle cx="951" cy="284" r="17"/><path d="M988 682C1120 640 1110 790 1030 792L988 780Z"/><path d="M1042 595A28 28 0 1 0 1045 638L1025 615Z"/><circle cx="1305" cy="246" r="17"/><path d="M2403 72A28 28 0 1 0 2403 122L2382 97Z"/><circle cx="2411" cy="164" r="17"/><path d="M2200 130L2285 225L2210 295A92 100 0 1 0 2200 130Z"/><circle cx="2435" cy="615" r="22"/><path d="M2547 645A44 44 0 1 0 2547 715Z"/></g>
<path d="M368 45H475V100H368ZM695 47H800V103H695ZM75 178H130V278H75ZM217 337H288V483H217ZM75 600H175V688H75ZM122 600V688M600 627H638V702H600ZM543 722H648V775H543ZM1477 798H1545V832H1477ZM1562 757H1602V833H1562ZM1947 565V843H2050"/>
<circle cx="588" cy="347" r="176"/><circle cx="588" cy="347" r="150"/>
<path d="M945 83H1048V104H992V272H972V104H945ZM1015 133H1080L1105 155V270H1012V155ZM1035 160H1080V200H1035ZM1115 145H1255V275H1115ZM1150 160H1205V190H1150ZM1150 215L1230 275M780 297H925V408L900 435H780ZM813 317H905V408H813ZM780 467V515H815V467M950 317H978V545L950 515ZM1025 317H1055V545H1025ZM1095 317H1140L1170 350V545H1140V370H1120V545H1095ZM1195 345H1225V545H1195ZM1240 475H1280V540H1240M775 280L930 85V275H895V235H800ZM850 205L895 150V205Z"/>
<path d="M1545 120L1520 155H1425V185L1465 235V290L1435 320H1330L1365 290H1435V235L1378 190V150L1400 120ZM1570 120H1600V215L1625 235L1650 200V120H1680V225L1570 320H1515M1702 125H1720L1795 200V120H1830V265H1800L1735 170V265H1702ZM1850 130H1935V155H1900V265H1875V155H1850ZM1947 130H1975V312H1947ZM1975 235H2010L2025 255V312H2050V130H2022V205H1975"/>
<path d="M1642 378H2375M1642 492H2375" stroke-width="6"/>
</g>

<g class="white">
<path d="M690 290V210L750 147H915L1010 243H1110L1145 290H1235L1290 345H1530L1545 380L1570 425M2045 77V100L1920 235H1590L1555 265V410L1580 440M1878 513V425L1860 405H1780L1735 450H1650L1620 435" opacity=".65"/>
</g>
<use href="#rail-left" class="under green-line"/><use href="#rail-right" class="under green-line"/><use href="#rail-blue" class="under blue-line"/>
<use href="#rail-left" class="hatch"/><use href="#rail-right" class="hatch"/><use href="#rail-blue" class="hatch"/>
<use href="#edge-top" class="rim green-rim"/><use href="#edge-bottom" class="rim blue-rim"/>
<use href="#edge-top" class="rim broken"/><use href="#edge-bottom" class="rim broken"/>

<g fill="none" stroke="#4a662a" stroke-width="5"><path d="M345 180H795V558H345ZM1217 58H2325V98H1190ZM1637 325H2380V540H1637ZM213 282H257V325H213ZM488 533H532V577H488ZM2475 265H2522V467H2475ZM378 310H400V380H378ZM430 317H495V380H430Z"/></g>
<path d="M1190 50H2328V100H1190Z" fill="none" stroke="#848484" stroke-width="5"/>
<path d="M1640 370H2377V500H1640ZM1314 338H1533V540H1314ZM40 327H180V512H40Z" fill="none" stroke="#62b8a6" stroke-width="5"/>
<g class="mirror"><text x="-2378" y="292">ARDUINO SYNTH BASED ON MOZZI LIBRARY</text><text x="-1270" y="354">DESIGNED BY</text><text x="-1285" y="408">ARNOV SHARMA</text></g>
<g class="marks"><text x="1260" y="128">3  4  X  X  G  X  N  5  2  2  X  X  S  C  5  S  X  X</text><text x="1260" y="158">N  4  S  X  2  C  E  X  0  4  X  S  3  C  X  2  S  X</text></g>

<g><use href="#pin" x="392" y="72"/><use href="#pin" x="447" y="72"/><use href="#pin" x="720" y="75"/><use href="#pin" x="775" y="75"/><use href="#pin" x="765" y="212"/><use href="#pin" x="765" y="266"/><use href="#pin" x="765" y="473"/><use href="#pin" x="765" y="526"/><use href="#pin" x="375" y="266"/><use href="#pin" x="375" y="420"/><use href="#pin" x="375" y="526"/><use href="#pin" x="621" y="745"/><use href="#hot" x="375" y="212"/><use href="#hot" x="375" y="473"/><use href="#hot" x="102" y="200"/><use href="#hot" x="102" y="256"/><use href="#hot" x="566" y="747"/><path d="M93 325H132V360H93ZM93 475H132V510H93Z" class="pad"/>
<use href="#pin" x="1217" y="77"/><use href="#pin" x="1271" y="77"/><use href="#pin" x="1322" y="77"/><use href="#pin" x="1373" y="77"/><use href="#pin" x="1425" y="77"/><use href="#pin" x="1478" y="77"/><use href="#pin" x="1526" y="77"/><use href="#pin" x="1579" y="77"/><use href="#pin" x="1632" y="77"/><use href="#pin" x="1683" y="77"/><use href="#pin" x="1734" y="77"/><use href="#pin" x="1788" y="77"/><use href="#pin" x="1838" y="77"/><use href="#pin" x="1890" y="77"/><use href="#pin" x="1941" y="77"/><use href="#pin" x="1995" y="77"/><circle cx="2045" cy="77" r="18" fill="#fff"/><use href="#pin" x="2097" y="77"/><use href="#pin" x="2147" y="77"/><use href="#pin" x="2202" y="77"/><use href="#hot" x="2253" y="77"/><use href="#hot" x="2305" y="77"/>
<use href="#pin" x="1663" y="355"/><use href="#pin" x="1718" y="355"/><use href="#pin" x="1773" y="355"/><use href="#pin" x="1824" y="355"/><use href="#pin" x="1878" y="355"/><use href="#pin" x="1929" y="355"/><use href="#pin" x="1984" y="355"/><use href="#pin" x="2035" y="355"/><use href="#pin" x="2088" y="355"/><use href="#pin" x="2139" y="355"/><use href="#pin" x="2194" y="355"/><use href="#pin" x="2245" y="355"/><use href="#pin" x="2298" y="355"/><use href="#pin" x="2350" y="355"/>
<use href="#pin" x="1663" y="513"/><use href="#pin" x="1718" y="513"/><use href="#pin" x="1773" y="513"/><use href="#pin" x="1824" y="513"/><circle cx="1878" cy="513" r="18" fill="#fff"/><use href="#pin" x="1929" y="513"/><use href="#hot" x="1984" y="513"/><use href="#hot" x="2035" y="513"/><use href="#pin" x="2088" y="513"/><use href="#pin" x="2139" y="513"/><use href="#pin" x="2194" y="513"/><use href="#pin" x="2245" y="513"/><use href="#pin" x="2298" y="513"/><use href="#pin" x="2350" y="513"/>
<use href="#pin" x="1356" y="392"/><use href="#pin" x="1356" y="486"/><use href="#hot" x="1491" y="392"/><use href="#hot" x="1491" y="486"/>
<path d="M2478 270H2518V308H2478ZM2478 322H2518V360H2478ZM2478 372H2518V410H2478ZM2478 426H2518V464H2478Z" class="pad"/><path d="M2476 477H2520V518H2476ZM2476 527H2520V568H2476Z" fill="url(#dash)"/></g>
<g><use href="#via" x="936" y="110"/><use href="#via" x="967" y="135"/><use href="#via" x="997" y="170"/><use href="#via" x="1085" y="213"/><use href="#via" x="1022" y="300"/><use href="#via" x="935" y="417"/><use href="#via" x="988" y="453"/><use href="#via" x="783" y="637"/><use href="#via" x="452" y="255"/><use href="#via" x="1270" y="540"/><use href="#via" x="1410" y="375"/><use href="#via" x="1442" y="388"/><use href="#via" x="1783" y="155"/><use href="#via" x="1725" y="415"/><use href="#via" x="1800" y="427"/><use href="#via" x="1838" y="427"/><use href="#via" x="1962" y="407"/><use href="#via" x="1940" y="443"/><use href="#via" x="2352" y="480"/><use href="#via" x="2080" y="620"/><use href="#via" x="1272" y="213"/></g>
<g class="hotvia"><use href="#via" x="1113" y="243"/><use href="#via" x="1578" y="440"/><use href="#via" x="2347" y="420"/><use href="#via" x="2458" y="420"/><use href="#via" x="2472" y="174"/><use href="#via" x="1018" y="527"/><use href="#via" x="1037" y="532"/><use href="#via" x="93" y="550"/><use href="#via" x="607" y="285"/></g>

<g><use href="#padA" x="222"/><use href="#padB" x="325"/><use href="#padA" x="429"/><use href="#padA" x="697"/><use href="#padB" x="798"/><use href="#padA" x="902"/><use href="#padA" x="1171"/><use href="#padB" x="1272"/><use href="#padA" x="1376"/><use href="#padA" x="1640"/><use href="#padB" x="1746"/><use href="#padA" x="1850"/><use href="#padA" x="2115"/><use href="#padB" x="2220"/><use href="#padA" x="2320"/></g>
<path d="M228 343H278V387H228ZM70 625H112V658H70ZM133 625H175V658H133Z" fill="#d9f0d0"/><path d="M75 640H107M138 640H170M233 360H273" stroke="#48d048" stroke-width="8" stroke-dasharray="10 4"/><path d="M112 430H155M112 445H155" stroke="#dfe" stroke-width="5"/>
<g><use href="#led" x="581" y="270"/><use href="#led" transform="translate(527 285) rotate(-42)"/><use href="#led" transform="translate(647 285) rotate(42)"/><use href="#led" transform="translate(505 350) rotate(-90)"/><use href="#led" transform="translate(661 350) rotate(90)"/><use href="#led" transform="translate(536 400) rotate(-135)"/><use href="#led" transform="translate(632 402) rotate(135)"/><use href="#led" transform="translate(581 420) rotate(180)"/></g>
<path d="M525 433H565V510H525Z" fill="#fff"/><path d="M530 440H560V463H530ZM530 478H560V500H530ZM602 630H636V657H602ZM604 668H636V695H604ZM1480 802H1540V828H1480ZM1566 762H1598V788H1566ZM1566 808H1598V830H1566ZM2055 757H2085V780H2055ZM2055 795H2085V818H2055ZM2095 560H2120V585H2095ZM1574 505H1600V535H1574Z" fill="#32d432"/><path d="M1566 788H1598V806H1566Z" fill="#fff"/><circle cx="2142" cy="572" r="16" fill="#bff5bf"/>
<g fill="none" stroke="#6d8a45" stroke-width="3"><circle cx="578" cy="350" r="32"/><circle cx="578" cy="350" r="18"/><path d="M540 315L620 390M620 315L540 390M578 300V400"/></g>
<path d="M622 660V740" stroke="#2e9a8e" stroke-width="14"/>
<g fill="none" stroke="#a8a8a8" stroke-width="3"><circle cx="99" cy="99" r="39"/><circle cx="117" cy="783" r="39"/><circle cx="2484" cy="96" r="39"/><circle cx="2478" cy="789" r="39"/></g>

<g class="silk"><text x="318" y="84">R.</text><text x="482" y="82">R-</text><text x="638" y="88">L.</text><text x="845" y="88">-</text><text x="445" y="154">SPEAKER OUT</text><text x="142" y="215">GND</text><text x="142" y="268">VCC</text><text x="340" y="597">POT1</text><text x="796" y="597">POT2</text><text x="1262" y="590">POT3</text><text x="1723" y="592">POT4</text><text x="2206" y="597">POT5</text><text x="553" y="823">LDR</text><text x="1488" y="785">D9</text><text x="2025" y="446">ATMEGA328PU</text><text x="2458" y="222">19º</text><text x="2416" y="306">13</text><text x="2416" y="358">12</text><text x="2416" y="408">11</text><text x="2416" y="458">10</text><text x="2396" y="510">GND</text><text x="2396" y="566">VCC</text></g>
<g class="netname"><text x="202" y="585" class="net-large">GND</text><text x="2396" y="632">VCC</text><text x="490" y="696" class="net-small">VCC</text></g>
<g fill="none" stroke="#d5d5d5" stroke-width="9" opacity=".7"><path d="M1395 525A80 80 0 0 1 1555 530M1315 565L1335 605L1360 560M1410 560A42 42 0 1 0 1480 620"/><circle cx="1535" cy="612" r="34"/><path d="M1580 520L1640 620" stroke-width="28"/><path d="M1664 560V605M1830 560V590"/></g>
</svg>
  <table class="drill">
   <colgroup><col class="c-fig"><col class="c-size"><col class="c-plate"><col class="c-qty"></colgroup>
   <tr><td colspan="4">DRILL CHART: TOP to BOTTOM</td></tr>
   <tr><td colspan="4">ALL UNITS ARE IN MILLIMETERS</td></tr>
   <tr><td>FIGURE</td><td>FINISHED_SIZE</td><td>PLATED</td><td>QTY</td></tr>
   <tr><td><span class="fig">A</span></td><td>0.3302</td><td>PLATED</td><td>39</td></tr>
   <tr><td><span class="fig">B</span></td><td>0.85</td><td>PLATED</td><td>2</td></tr>
   <tr><td><span class="fig">C</span></td><td>0.9144</td><td>PLATED</td><td>32</td></tr>
   <tr><td><span class="fig">E</span></td><td>0.9652</td><td>PLATED</td><td>31</td></tr>
  </table>
  <div class="ghost">Full-screen Snip</div>
 </main>

 <aside class="side">
  <div class="pane-title"><h2>Options</h2><span class="bar"></span>
   <button aria-label="Minimize pane"><svg viewBox="0 0 10 10"><path d="M1 8.500h7" stroke-width="2"/></svg></button><button aria-label="Float pane"><svg viewBox="0 0 10 10"><path d="M1 4h5v5H1zM3.500 4V1H9v5H6M3 1.500h6"/></svg></button><button aria-label="Close pane"><svg viewBox="0 0 10 10"><path d="M1 1l8 8M9 1L1 9" stroke-width="2"/></svg></button>
  </div>
  <section class="pane options">
   <div class="options-body">
    <p>Active Class and Subclass:</p>
    <select class="class-select" aria-label="Active class"><option>Etch</option></select>
    <div class="subclass"><button class="chip" aria-label="Layer visibility"></button><span class="swatch-field"><i class="swatch"></i><select aria-label="Active subclass"><option>Bottom</option></select></span></div>
    <label class="check zone"><input type="checkbox">Enable zone boundary editing</label>
    <fieldset class="commands"><legend>Segment commands</legend>
     <label for="s1">Click:</label><select id="s1"><option>Add notch</option></select>
     <label for="s2">Drag:</label><select id="s2"><option>Slide</option></select></fieldset>
    <fieldset class="commands"><legend>Vertex commands</legend>
     <label for="v1">Click:</label><select id="v1"><option>Chamfer/Round</option></select>
     <label for="v2">Drag:</label><select id="v2"><option>Move</option></select></fieldset>
    <fieldset class="slide"><legend>Slide</legend><label class="check"><input type="checkbox">Extend Selection (hold Shift to toggle)</label></fieldset>
   </div>
   <div class="scroll"><svg viewBox="0 0 10 6"><path d="M1 5l4-4 4 4"/></svg><div class="thumb"></div><svg viewBox="0 0 10 6"><path d="M1 1l4 4 4-4"/></svg></div>
  </section>
  <div class="tabs"><button>Command</button><button>View</button><button class="active">Find</button><button>Visibility</button></div>
  <div class="pane-title"><h2>Find</h2><span class="bar"></span>
   <button aria-label="Minimize pane"><svg viewBox="0 0 10 10"><path d="M1 8.500h7" stroke-width="2"/></svg></button><button aria-label="Float pane"><svg viewBox="0 0 10 10"><path d="M1 4h5v5H1zM3.500 4V1H9v5H6M3 1.500h6"/></svg></button><button aria-label="Close pane"><svg viewBox="0 0 10 10"><path d="M1 1l8 8M9 1L1 9" stroke-width="2"/></svg></button>
  </div>
  <section class="pane find">
   <fieldset class="filter"><legend>Design Object Find Filter</legend>
    <div class="all"><button>All On</button><button>All Off</button></div>
    <div class="checks">
     <label class="check"><input type="checkbox">Groups</label><label class="check"><input type="checkbox">Shapes</label>
     <label class="check off"><input type="checkbox" disabled>Comps</label><label class="check"><input type="checkbox">Voids/Cavities</label>
     <label class="check off"><input type="checkbox" disabled>Symbols</label><label class="check off"><input type="checkbox" disabled>Cline segs</label>
     <label class="check off"><input type="checkbox" disabled>Functions</label><label class="check"><input type="checkbox">Other segs</label>
     <label class="check"><input type="checkbox">Nets</label><label class="check off"><input type="checkbox" disabled>Figures</label>
     <label class="check off"><input type="checkbox" disabled>Pins</label><label class="check"><input type="checkbox">DRC errors</label>
     <label class="check off"><input type="checkbox" disabled>Vias</label><label class="check off"><input type="checkbox" disabled>Text</label>
     <label class="check off"><input type="checkbox" disabled>Clines</label><label class="check"><input type="checkbox">Ratsnests</label>
     <label class="check off"><input type="checkbox" disabled>Lines</label><label class="check"><input type="checkbox">Rat Ts</label>
    </div>
   </fieldset>
   <fieldset class="byname"><legend>Find By Name</legend>
    <div class="row"><select class="kind" aria-label="Object type"><option>Property</option></select><select class="by" aria-label="Match by"><option>Name</option></select></div>
    <div class="row"><label for="fname">&gt;</label><input id="fname" type="text"><button>More...</button></div>
   </fieldset>
  </section>
 </aside>
</div>

<footer class="status">
 <span>Idle</span><span class="fill"><b></b></span><span></span><span>Bottom</span><span>114.4000, 39.7000</span><span class="key"><button>P</button></span><span class="key"><button>A</button></span><span></span><span></span><span>Shape edit</span><span>Off</span><span class="fill"><b>DRC</b></span><span>0</span>
</footer>
</body>
</html>
```

FILE: styles.css
```css
* { box-sizing: border-box; }
body {
  margin: 0;
  height: 100vh;
  display: flex;
  flex-direction: column;
  overflow: hidden;
  background: #f0f0f0;
  color: #000;
  font: 12px/16px "Noto Sans", sans-serif;
}
button, select, input { font: inherit; color: inherit; margin: 0; padding: 0; }
button { border: 0; background: none; }
h1, h2, p { margin: 0; font-weight: 400; }
.defs { position: absolute; }

.titlebar { flex: none; height: 28px; display: flex; align-items: center; background: #fff; }
.titlebar h1 { flex: 1; font-size: 15px; line-height: 20px; }
.app-icon { width: 20px; height: 20px; margin: 0 5px 0 2px; }
.window-controls { display: flex; }
.window-controls button { width: 58px; height: 28px; }
.window-controls button:last-child { width: 64px; }
.window-controls svg { width: 12px; height: 12px; fill: none; stroke: #000; }

.menubar {
  flex: none;
  height: 29px;
  display: flex;
  justify-content: space-between;
  background: #fff;
  border-bottom: 3px solid #c80000;
}
.menu {
  display: grid;
  grid-template-columns: 40px 62px 56px 65px 65px 45px 43px 52px 55px 58px 56px 70px 50px 100px 60px 50px;
  padding: 2px 0 0 8px;
  font-size: 14px;
}
.menu button { text-align: left; white-space: nowrap; }
.brand { font: 17px/18px "DejaVu Sans", sans-serif; color: #333; }
.macron { position: relative; }
.macron::before { content: ""; position: absolute; left: 2px; top: 1px; width: 7px; height: 2px; background: #e44; }

.toolbar { flex: none; height: 34px; display: flex; border-bottom: 1px solid #b4b4b4; }
.group {
  display: flex;
  padding: 2px 2px 0 11px;
  border-right: 1px solid #b4b4b4;
  background: radial-gradient(circle, #bbb 1px, transparent 2px) 4px 4px / 3px 5px repeat-y;
}
.group:last-child { border-right: 0; }
.group button, .vgroup button { display: grid; place-items: center; width: 31px; height: 30px; }
.group svg, .vgroup svg { width: 22px; height: 22px; filter: drop-shadow(1px 1px 1px #aaa); overflow: visible; }
.group .drop { width: 15px; }
.group .drop svg { width: 9px; height: 6px; filter: none; }
.group .selected { background: #c1dcf3; border: 1px solid #90c8f6; }
.blueprint svg { fill: url(#blue); stroke: #51659d; stroke-width: 2px; }
.blueprint .pale { fill: #e4e6ea; stroke-width: 1px; }
.icon-label { font: bold 7px "Liberation Sans", sans-serif; }
.icon-odb { font: bold 8px "Liberation Sans", sans-serif; fill: #fff; }
.light { fill: #fff; }
.icon-3d { font: bold 19px "Liberation Sans", sans-serif; fill: #9fc3e8; stroke: #4a74a6; stroke-width: 1px; }
.icon-3d.shade { fill: #6f94bd; }
.icon-num { font: bold 9px "Liberation Sans", sans-serif; fill: #555; }
.icon-tiny { font: bold 6px "Liberation Mono", monospace; }
.icon-help { font: bold 15px "Liberation Sans", sans-serif; fill: #40558c; }
.icon-ref { font: bold 8px "Liberation Sans", sans-serif; fill: #b33; }
.icon-abc { font: bold 12px "Open Sans", sans-serif; fill: #808080; }

.workspace { flex: 1; min-height: 0; display: flex; }
.dock { flex: none; width: 35px; margin-bottom: 2px; border: solid #b4b4b4; border-width: 0 1px 1px 0; }
.vgroup {
  padding: 12px 0 1px 1px;
  border-bottom: 1px solid #b4b4b4;
  background: radial-gradient(circle, #bbb 1px, transparent 2px) 4px 4px / 4px 3px repeat-x;
}
.vgroup:last-child { border: 0; }

.canvas {
  position: relative;
  flex: 1;
  min-width: 0;
  margin: 11px 16px 12px 11px;
  padding: 304px 0 0 384px;
  background: #000;
  overflow: hidden;
}
.pcb { display: block; width: 870px; height: 290px; }
.pcb .mag { fill: none; stroke: #d400d4; stroke-width: 4px; }
.pcb .blue { fill: none; stroke: #1c5491; stroke-width: 6px; }
.pcb .green { fill: none; stroke: #158015; stroke-width: 6px; }
.pcb .white { fill: none; stroke: #dcdcdc; stroke-width: 6px; }
.pcb .under { fill: none; stroke-width: 13px; }
.green-line { stroke: #158015; }
.blue-line { stroke: #1c5491; }
.pcb .hatch { fill: none; stroke: #dcdcdc; stroke-width: 13px; stroke-dasharray: 26px 24px; }
.pcb .rim { fill: none; stroke-width: 5px; }
.green-rim { stroke: #22c422; }
.blue-rim { stroke: #2a78cc; }
.pcb .broken { stroke: #e6e6e6; stroke-dasharray: 16px 16px; }
.pcb .ring { fill: none; stroke: #5a7838; stroke-width: 3px; }
.pcb .hotvia { filter: brightness(2) grayscale(1); }
.pcb .pad { fill: #2c6f94; stroke: none; }
.pcb .silk { font: 43px "Liberation Mono", monospace; fill: #d838d8; stroke: #d838d8; stroke-width: 1px; }
.mirror { font: 64px "Liberation Mono", monospace; fill: #4a662a; transform: scaleX(-1); }
.marks { font: 29px "Liberation Mono", monospace; fill: #5a7838; white-space: pre; }
.marks text { white-space: pre; }
.netname { font: 32px "Liberation Sans", sans-serif; fill: #b8b8b8; }
.net-large { font-size: 40px; }
.net-small { font-size: 22px; }

.drill {
  width: 872px;
  margin: 5px 0 0 11px;
  table-layout: fixed;
  border-collapse: collapse;
  font: 36px/40px "Liberation Mono", monospace;
  color: #5c8636;
  -webkit-text-stroke: 1px #000;
}
.drill td { height: 44px; padding: 2px 0 0; border: 2px solid #4a662a; text-align: center; white-space: pre; }
.c-fig { width: 158px; }
.c-size { width: 353px; }
.c-plate { width: 223px; }
.fig { display: inline-block; width: 13px; height: 13px; border: 1px solid #5c8636; border-radius: 50%; font-size: 10px; line-height: 11px; vertical-align: middle; -webkit-text-stroke: 0; }
.ghost { position: absolute; left: 1201px; top: 370px; width: 202px; height: 24px; padding-left: 34px; background: rgb(16 24 27 / 70%); color: #000; font-size: 14px; line-height: 26px; }

.side { flex: none; width: 308px; display: flex; flex-direction: column; padding-bottom: 2px; font: 11px/14px "Liberation Sans", sans-serif; }
.pane-title { flex: none; height: 24px; display: flex; align-items: center; padding: 0 5px 0 16px; }
.pane-title h2 { font: 12px/16px "Noto Sans", sans-serif; }
.pane-title .bar { flex: 1; height: 4px; margin: 4px 6px 0 2px; background: #b4b4b4; }
.pane-title button { width: 18px; height: 16px; }
.pane-title button svg { width: 10px; height: 10px; fill: none; stroke: #000; }
.pane { border: 1px solid #828790; }
.options { flex: none; height: 389px; display: flex; overflow: hidden; }
.options-body { flex: 1; min-width: 0; padding: 34px 0 0 8px; overflow: hidden; }
.options-body > * { display: block; }
.class-select { width: 150px; margin: 15px 0 0 28px; }
select {
  height: 21px;
  padding: 0 20px 0 3px;
  border: 1px solid #adadad;
  border-radius: 0;
  appearance: none;
  background: #e1e1e1 url("data:image/svg+xml,%3Csvg xmlns='http://www.w3.org/2000/svg' width='10' height='6'%3E%3Cpath d='M1 1l4 4 4-4' fill='none' stroke='%23555'/%3E%3C/svg%3E") no-repeat right 5px center;
}
.options-body .subclass { display: flex; margin-top: 12px; }
.chip { width: 12px; height: 13px; margin: 3px 8px 0 8px; border: 2px solid #888; border-right-color: #fff; border-bottom-color: #fff; outline: 1px solid #888; background: #3399ff; }
.swatch-field { position: relative; }
.swatch-field select { display: block; width: 150px; height: 28px; padding: 0 20px 8px 24px; background-color: #fff; border-color: #7a7a7a; }
.swatch { position: absolute; left: 5px; top: 5px; width: 15px; height: 18px; background: #3399ff; border: 1px solid #000; }
.check { display: flex; align-items: center; gap: 3px; height: 16px; line-height: 16px; white-space: nowrap; }
.options-body .zone { display: flex; margin: 17px 0 23px; }
input[type="checkbox"] { flex: none; appearance: none; width: 16px; height: 16px; border: 1px solid #222; background: #fff; }
input[type="checkbox"]:disabled { border-color: #ccc; }
.off { color: #777; }
fieldset { margin: 0; border: 1px solid #dcdcdc; padding: 0; }
legend { padding: 0 2px; }
.commands { width: 224px; height: 79px; margin-bottom: 9px; padding-left: 13px; }
.commands legend, .slide legend { margin-left: -7px; }
.options-body .commands { display: grid; grid-template-columns: 49px 115px; grid-auto-rows: 21px; row-gap: 12px; align-items: center; padding-top: 1px; }
.slide { width: 224px; height: 80px; padding: 2px 0 0 13px; }
.scroll { flex: none; width: 19px; display: flex; flex-direction: column; align-items: center; padding: 8px 0; }
.scroll svg { flex: none; width: 11px; height: 7px; fill: none; stroke: #555; stroke-width: 2px; }
.thumb { width: 19px; height: 178px; margin: 6px 0 auto; background: linear-gradient(#f0f0f0, #f0f0f0) center / 11px 12px no-repeat #cdcdcd; }

.tabs { flex: none; display: flex; align-items: flex-end; height: 29px; padding-left: 2px; border-bottom: 1px solid #a0a0a0; font: 12px/16px "Noto Sans", sans-serif; }
.tabs button { height: 22px; padding: 0 14px; border: 1px solid #dcdcdc; border-bottom: 0; }
.tabs button + button { border-left: 0; }
.tabs .active { height: 24px; margin-bottom: -1px; padding: 0 16px; background: #fff; }
.find { flex: 1; min-height: 0; padding: 22px 0 0 8px; }
.filter { width: 189px; height: 236px; padding-left: 6px; }
.all { display: flex; gap: 13px; padding: 5px 0 0 1px; }
.all button { width: 43px; height: 14px; line-height: 12px; border: 1px solid #adadad; background: #e1e1e1; }
.all button + button { width: 47px; }
.checks { display: grid; grid-template-columns: 84px 1fr; row-gap: 6px; margin-top: 6px; }
.byname { width: 189px; height: 71px; margin-top: 83px; padding-left: 6px; }
.byname .row { display: flex; gap: 4px; margin-top: 2px; }
.kind { width: 122px; }
.by { width: 52px; }
.byname .row label { width: 10px; line-height: 20px; }
.byname input { width: 108px; height: 22px; border: 2px inset #999; background: #fff; }
.byname button { width: 48px; height: 20px; margin-top: 2px; border: 1px solid #adadad; background: #e1e1e1; }

.status {
  flex: none;
  height: 32px;
  display: grid;
  grid-template-columns: 167fr 168fr 169fr 169fr 169fr 34px 34px 168fr 168fr 169fr 170fr 168fr 168fr;
  border-bottom: 2px solid #474b47;
}
.status span { display: flex; align-items: center; padding: 2px 0 0 4px; border-left: 1px solid #d7d7d7; }
.status span:first-child { padding-left: 2px; border: 0; }
.status .fill { padding: 1px 1px 0 4px; }
.status .fill b { flex: 1; align-self: stretch; font-weight: 400; line-height: 31px; background: #0f0; }
.status button { width: 26px; height: 26px; border: 1px solid #adadad; background: #e1e1e1; }
```
